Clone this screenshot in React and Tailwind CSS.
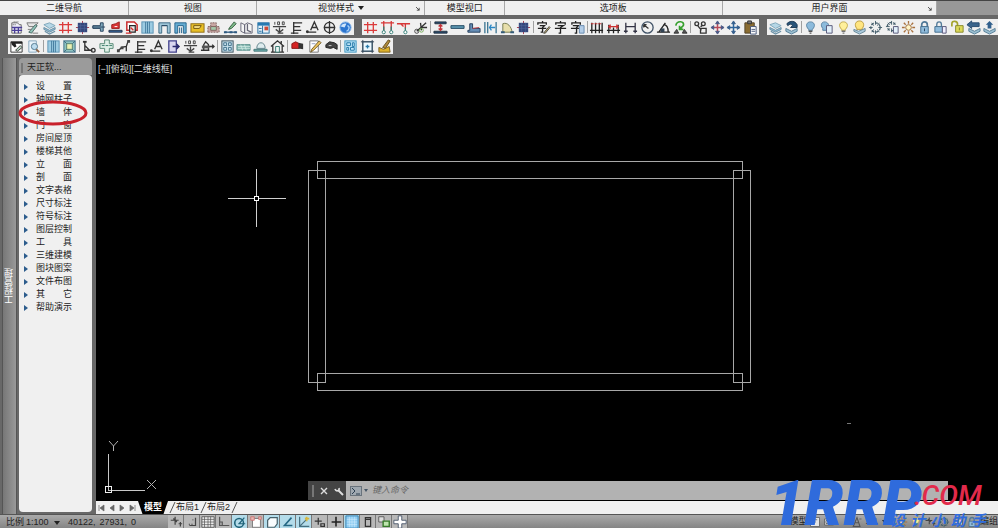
const STROKE = { fill: 'none', strokeWidth: 1.4 }

const icons = {
  table: (
    <>
      <path d="M3 14V3h6l2 2h2v9z" fill="#eeeef6" stroke="#666" />
      <path d="M5 2h6M4 5h4" stroke="#555" strokeDasharray="1 1" />
      <path d="M3 8h11M3 11h11M6 8v6M10 8v6" stroke="#4b3f9a" strokeWidth="1.4" />
    </>
  ),
  plan: (
    <>
      <path d="M2 3h12l-4 4H4z" fill="#e5e5e5" stroke="#777" />
      <path d="M4 13l7-8 2 1-6 8z" fill="#8fc3b8" stroke="#4e6b66" />
      <path d="M3 10h4M8 14h6" stroke="#777" />
    </>
  ),
  layers: (
    <>
      <path d="M2 5l6-2 6 3-6 3z" fill="#b6d7e6" stroke="#7fa6ba" />
      <path d="M2 8l6 3 6-3v2l-6 3-6-3z" fill="#92bdd2" stroke="#668da4" />
      <path d="M3 12l5 3 6-3" stroke="#6b91a6" {...STROKE} />
    </>
  ),
  grid: <path d="M5 2v12M11 2v12M1 5h14M1 11h14" stroke="#dc3b3b" {...STROKE} />,
  column: (
    <>
      <path d="M8 1v14M1 8h14" stroke="#a33a4e" />
      <rect x="3" y="3" width="10" height="10" fill="#34477c" />
      <path d="M3 6h10M3 9h10M6 3v10M10 3v10" stroke="#54679c" strokeWidth=".6" />
    </>
  ),
  wall: (
    <>
      <path d="M2 6h8V3h3v9h-3V9H2z" fill="#7fa9bd" stroke="#27435e" />
      <path d="M1 7.5h14" stroke="#27435e" />
    </>
  ),
  redWall: (
    <>
      <path d="M4 9V5l4-1 4-2v7z" fill="#d93636" stroke="#9b1d1d" />
      <path d="M1 11h14v2H1z" fill="#35649b" stroke="#25344d" />
      <path d="M7 7h3" stroke="#fff" />
    </>
  ),
  room: (
    <>
      <path d="M3 2h8l3 3v6H3z" fill="#fff" stroke="#c92c2c" strokeWidth="1.6" />
      <path d="M6 6h6v7H6z" fill="#e8e8e8" stroke="#262626" strokeWidth="1.3" />
      <path d="M2 14h6M7 8l3 3" stroke="#d42c2c" {...STROKE} />
    </>
  ),
  window: (
    <>
      <rect x="2" y="2" width="12" height="12" fill="#9ccbe2" stroke="#5a93b4" />
      <path d="M6 2v12M8 2v12M10 2v12" stroke="#427a9d" />
    </>
  ),
  door: (
    <>
      <path d="M2 14V3h12v11h-3V6H5v8z" fill="#9fc6d8" stroke="#3d6b84" />
      <path d="M5 6h6" stroke="#27435e" />
    </>
  ),
  doorBlue: (
    <>
      <path d="M2 14V3h12v11h-3V6H5v8z" fill="#66add3" stroke="#28648b" />
      <path d="M7 8v6M9 8v6" stroke="#28648b" />
    </>
  ),
  note: (
    <>
      <rect x="1" y="4" width="14" height="9" fill="#e8bf27" stroke="#8d6b15" />
      <path d="M4 6h8l-2 3H4z" fill="#f6e08a" stroke="#72550e" />
    </>
  ),
  block: (
    <>
      <path d="M2 13V7h3V3h6v4h3v6z" fill="#c9a7a4" stroke="#80625f" strokeDasharray="2 1" />
      <path d="M5 7h6v4H5z" fill="#a4c8aa" stroke="#80625f" />
    </>
  ),
  pencil: (
    <>
      <path d="M7 8l5-6 2 2-5 5-3 1z" fill="#7fba8a" stroke="#305c3b" />
      <path d="M2 13h12" stroke="#2e5a80" {...STROKE} />
      <path d="M1 12h3v2H1zM7 12h3v2H7zM12 12h3v2h-3z" fill="#2e5a80" />
    </>
  ),
  book: (
    <>
      <path d="M2 3l4 2v9l-4-2zM6 5l3-2 5 2v9H6z" fill="#f5f5f5" stroke="#686877" />
      <path d="M9 4v7l4 2" stroke="#686877" {...STROKE} />
    </>
  ),
  panel: (
    <>
      <rect x="2" y="3" width="12" height="11" fill="#e6f3fb" stroke="#246c9e" />
      <path d="M2 3h12v3H2z" fill="#2779b1" />
      <path d="M7 6v8M3 9h3M3 12h3" stroke="#246c9e" />
      <rect x="9" y="7" width="4" height="4" fill="#ce4a38" />
    </>
  ),
  dims: (
    <>
      <path d="M1 7h14M8 8v6M6 14h6M4 10l4 3 4-3" stroke="#444" {...STROKE} />
      <path d="M3 2v3M6 2h2v3H6zM11 2h2v3h-2z" stroke="#444" fill="none" />
    </>
  ),
  ladder: <path d="M5 2v13M5 3h9M5 7h7M5 11h8M2 14h8" stroke="#333" {...STROKE} />,
  text: (
    <>
      <path d="M6 11l4-9 4 9M7 8h6M2 13h10" stroke="#333" {...STROKE} />
      <circle cx="2.500" cy="12.500" r="1.500" fill="#333" />
    </>
  ),
  compass: (
    <>
      <circle cx="8" cy="8" r="5.5" stroke="#333" {...STROKE} />
      <path d="M8 1v14M2 8h12" stroke="#333" {...STROKE} />
    </>
  ),
  help: (
    <>
      <circle cx="8" cy="8" r="6" fill="#2c75cf" stroke="#8db8e8" />
      <path d="M3 7c1-3 4-4 6-3l-2 4z" fill="#cfe5fb" />
      <path d="M10 6c3 1 2 5-1 6" stroke="#a8cff5" {...STROKE} />
    </>
  ),
  axis: (
    <>
      <path d="M1 3h14M4 1v10M12 1v10" stroke="#d63737" {...STROKE} />
      <path d="M4 7v5M12 7v5" stroke="#368078" {...STROKE} />
      <circle cx="4" cy="13" r="1.7" stroke="#368078" fill="#fff" />
      <circle cx="12" cy="13" r="1.7" stroke="#368078" fill="#fff" />
    </>
  ),
  axisT: (
    <>
      <path d="M1 4h14M10 4v5M5 4l3 3" stroke="#d63737" {...STROKE} />
      <path d="M10 8v4" stroke="#368078" {...STROKE} />
      <circle cx="10" cy="13" r="1.700" stroke="#368078" fill="#fff" />
    </>
  ),
  trim: (
    <>
      <path d="M4 12L14 3M8 3l1 8M8 8h7" stroke="#333" {...STROKE} />
      <circle cx="4" cy="12" r="2.2" stroke="#444" fill="none" />
      <circle cx="9" cy="11" r="2" stroke="#78ad5b" fill="none" />
    </>
  ),
  beam: (
    <>
      <path d="M2 2h12v2H2zM1 12h14v2H1z" fill="#264b70" stroke="#253442" />
      <path d="M8 5v6M6 7l2-2 2 2M6 9l2 2 2-2" stroke="#c3343a" {...STROKE} />
    </>
  ),
  bar: <path d="M1 6h14v3H1z" fill="#5a94ae" stroke="#284f68" />,
  foot: (
    <>
      <path d="M2 11h2V4h3v5h8v4H2z" fill="#668eb6" stroke="#253e5b" />
      <path d="M7 9l7-1" stroke="#bf3e47" />
    </>
  ),
  split: (
    <>
      <path d="M2 2v12M5 2v12M14 2v12" stroke="#3d7693" {...STROKE} />
      <path d="M7 8h6M9 5L7 8l2 3" stroke="#2a87c4" {...STROKE} />
    </>
  ),
  arc: (
    <>
      <path d="M3 13V4c5-2 9 3 10 9z" fill="#e8dfac" stroke="#737a50" />
      <path d="M1 13h4M11 13h4" stroke="#345c79" strokeWidth="2" />
    </>
  ),
  glyphEdit: (
    <>
      <path d="M7 1v2M2 5V3h9v2M4 6h5L7 8v5H5M2 9h9" stroke="#222" {...STROKE} />
      <path d="M8 14l6-7 1 1-5 6z" fill="#c6b06b" stroke="#444" />
    </>
  ),
  glyph: <path d="M8 1v2M3 5V3h10v2M5 6h6L8 8v6H6M2 9h12" stroke="#222" {...STROKE} />,
  glyphPage: (
    <>
      <path d="M6 1v2M2 5V3h9v2M3 6h6L7 8v6H5M1 9h9" stroke="#222" {...STROKE} />
      <path d="M10 6h5v8h-5z" fill="#b4cee8" stroke="#668bb0" />
    </>
  ),
  marks: (
    <>
      <path d="M1 11h14M3 3v11M7 3v11M11 3v11M14 3v11" stroke="#222" {...STROKE} />
      <path d="M2 4h3M6 4h3M10 4h3" stroke="#c33" />
    </>
  ),
  marksRed: (
    <>
      <path d="M3 5v9M8 8v6M13 5v9M1 11h14" stroke="#222" {...STROKE} />
      <path d="M3 7h10M5 5L3 7l2 2M11 5l2 2-2 2" stroke="#c33" {...STROKE} />
    </>
  ),
  marksPlain: <path d="M3 3v11M13 3v11M3 7h10M1 12h4M11 12h4" stroke="#334" {...STROKE} />,
  radius: (
    <>
      <circle cx="8" cy="8" r="6" stroke="#415367" {...STROKE} />
      <path d="M9 9L4 5M4 5v3M4 5h3" stroke="#333" {...STROKE} />
    </>
  ),
  angle: (
    <>
      <path d="M1 13h14M3 13L10 3M8 5c4 0 5 4 5 8" stroke="#222" {...STROKE} />
      <path d="M5 9h4v4H5z" fill="#345" />
    </>
  ),
  refresh: (
    <>
      <path d="M3 6c1-6 10-5 8 0L8 9M7 6v4h4" stroke="#35a02d" fill="none" strokeWidth="1.8" />
      <path d="M1 14l3-4 2 4zM10 14l2-4 3 4z" fill="#555" stroke="#333" />
    </>
  ),
  copies: (
    <>
      <circle cx="4" cy="4" r="2" stroke="#333" {...STROKE} />
      <circle cx="11" cy="4" r="2" stroke="#333" {...STROKE} />
      <path d="M5 6l4 5M8 7l2-1M8 9h6v5H8z" stroke="#333" {...STROKE} />
    </>
  ),
  moveRed: (
    <>
      <path d="M8 2v12M2 8h12" stroke="#b84a5a" strokeWidth="1.6" />
      <path d="M6 4l2-3 2 3zM6 12l2 3 2-3zM4 6L1 8l3 2zM12 6l3 2-3 2z" fill="#4a5a86" stroke="#4a5a86" />
    </>
  ),
  move: (
    <>
      <path d="M8 2v12M2 8h12" stroke="#2c649b" strokeWidth="1.6" />
      <path d="M6 4l2-3 2 3zM6 12l2 3 2-3zM4 6L1 8l3 2zM12 6l3 2-3 2z" fill="#39618e" stroke="#39618e" />
    </>
  ),
  paste: (
    <>
      <path d="M2 3h10v11H2z" fill="#8a6c31" stroke="#514227" />
      <path d="M5 1h4v3H5z" fill="#777" stroke="#333" />
      <path d="M8 7h6v8H8z" fill="#fff" stroke="#457" />
      <path d="M9 10h4M9 12h4" stroke="#457" />
    </>
  ),
  layerBack: (
    <>
      <path d="M2 9l6 3 6-3v3l-6 3-6-3z" fill="#9bbfd1" stroke="#557e98" />
      <path d="M3 4c4-4 9-3 11 1v3H7l2-2C8 4 6 4 4 6z" fill="#28547a" stroke="#1c3852" />
    </>
  ),
  bulbBlue: (
    <>
      <path d="M6 10C2 6 4 2 8 2s6 4 2 8v1H6z" fill="#8cbbdc" stroke="#5580a0" />
      <path d="M6 12h4M7 14h2" stroke="#555" {...STROKE} />
    </>
  ),
  bulbPage: (
    <>
      <path d="M4 9C1 5 3 2 6 2s6 3 3 7v2H4z" fill="#8cbbdc" stroke="#5580a0" />
      <path d="M8 6h6v8H8z" fill="#e2f0fa" stroke="#557" />
    </>
  ),
  bulb: (
    <>
      <path d="M6 10C2 6 4 2 8 2s6 4 2 8v1H6z" fill="#fff09b" stroke="#bfa643" />
      <path d="M6 12h4M7 14h2" stroke="#777" {...STROKE} />
    </>
  ),
  bulbLayers: (
    <>
      <path d="M5 9C2 5 4 1 8 1s6 4 3 8v1H5z" fill="#ffe581" stroke="#bb9a39" />
      <path d="M2 10l5 2 7-3v3l-6 3-6-3z" fill="#abcadb" stroke="#668699" />
    </>
  ),
  freeze: (
    <>
      <circle cx="8" cy="8" r="5" stroke="#445e6c" {...STROKE} strokeDasharray="3 1.5" />
      <path d="M8 1v4M8 11v4M1 8h4M11 8h4M4 3l2 3M10 10l2 3M12 3l-2 3M4 13l2-3" stroke="#445e6c" fill="none" />
    </>
  ),
  freezePage: (
    <>
      <circle cx="7" cy="7" r="4.5" stroke="#445e6c" {...STROKE} strokeDasharray="3 1.5" />
      <path d="M7 1v4M7 9v4M1 7h4M3 3l2 2M11 3L9 5M3 11l2-2" stroke="#445e6c" fill="none" />
      <path d="M9 7h5v7H9z" fill="#e2f0fa" stroke="#557" />
    </>
  ),
  sun: (
    <>
      <circle cx="8" cy="8" r="3" fill="#fff5c7" stroke="#9b6b3b" />
      <path d="M8 1v3M8 12v3M1 8h3M12 8h3M3 3l2 2M11 11l2 2M13 3l-2 2M3 13l2-2" stroke="#a9713e" {...STROKE} />
    </>
  ),
  lock: (
    <>
      <path d="M5 8V5c0-4 6-4 6 0v3" stroke="#517998" fill="none" strokeWidth="1.8" />
      <path d="M4 7h8v7H4z" fill="#8fbbdb" stroke="#426d8d" />
      <path d="M8 9v3" stroke="#27435e" />
    </>
  ),
  lockPage: (
    <>
      <path d="M4 7V5c0-4 5-4 5 0v2" stroke="#517998" {...STROKE} />
      <path d="M2 7h8v6H2z" fill="#8fbbdb" stroke="#426d8d" />
      <path d="M10 7h4v7h-4z" fill="#eef" stroke="#557" />
    </>
  ),
  unlock: (
    <>
      <path d="M2 7V4c0-4 6-3 6 0v3" stroke="#a5a42e" fill="none" strokeWidth="1.8" />
      <path d="M6 6h8v7H6z" fill="#ddd958" stroke="#85882a" />
      <path d="M10 8v3" stroke="#85882a" />
    </>
  ),
  layerPrev: (
    <>
      <path d="M3 9l6 3 6-3v3l-6 3-6-3z" fill="#9bbfd1" stroke="#557e98" />
      <path d="M1 5l5-4v2h8v4H6v2z" fill="#3a648b" stroke="#274b70" />
    </>
  ),
  layerUp: (
    <>
      <path d="M2 9l6 3 6-3v3l-6 3-6-3z" fill="#9bbfd1" stroke="#557e98" />
      <path d="M8 1l4 4h-2v4H6V5H4z" fill="#31608d" />
    </>
  ),
  edit: (
    <>
      <path d="M2 3h12v11H2z" fill="#fff" stroke="#333" />
      <path d="M2 3h12v2H7l1 3-2 1-3-3z" fill="#222" />
      <path d="M7 12l5-5 2 2-5 4z" fill="#b6d4c1" stroke="#444" />
    </>
  ),
  preview: (
    <>
      <path d="M3 2h8v12H3z" fill="#eaf3fa" stroke="#84a5bd" />
      <circle cx="9" cy="8" r="3.3" fill="#bddcef" stroke="#52778e" />
      <path d="M11 11l3 3" stroke="#8b5f42" strokeWidth="2" />
    </>
  ),
  elevation: (
    <>
      <rect x="2" y="2" width="12" height="12" fill="#8fc3c0" stroke="#3d6b84" />
      <rect x="5" y="5" width="6" height="6" fill="#ecf0b2" stroke="#57816b" />
      <path d="M2 2l3 3M14 2l-3 3M2 14l3-3M14 14l-3-3" stroke="#3d6b84" />
    </>
  ),
  leader: (
    <>
      <path d="M3 2v10h8M3 7l5 5" stroke="#333" {...STROKE} />
      <path d="M1 2h4v2H1z" fill="#333" />
      <circle cx="12" cy="12" r="2" stroke="#333" {...STROKE} />
    </>
  ),
  cross: (
    <>
      <path d="M6 1h5v4h4v5h-4v4H6v-4H1V5h5z" fill="#e0f1e8" stroke="#548774" />
      <path d="M3 7h11" stroke="#367966" strokeDasharray="3 1" />
    </>
  ),
  polyline: (
    <>
      <path d="M2 13l4-4 5-1 2-6M11 8v5" stroke="#333" {...STROKE} />
      <path d="M1 11h3v3H1zM5 8h3v3H5zM12 1h3v3h-3z" fill="#444" />
    </>
  ),
  exit: (
    <>
      <path d="M3 2h8v12H3z" fill="#d9d7f0" stroke="#42418c" strokeWidth="1.400" />
      <path d="M7 8h7M11 5l3 3-3 3" stroke="#29296d" {...STROKE} />
    </>
  ),
  level: (
    <>
      <path d="M1 12h9M4 12V6l2-3 3 3v6M9 8h6M13 6l2 2-2 2" stroke="#333" {...STROKE} />
      <path d="M2 7h8v3H2z" fill="#555" />
    </>
  ),
  tiles: (
    <>
      <rect x="2" y="2" width="12" height="12" fill="#c8e1ed" stroke="#394e5b" />
      <path d="M4 4h3v3H4zM9 4h3v3H9zM4 9h3v3H4zM9 9h3v3H9z" stroke="#42718b" fill="none" />
    </>
  ),
  ground: (
    <>
      <path d="M1 6h14v6H1z" fill="#8bbbb5" stroke="#5c928e" />
      <path d="M2 8h13M2 10h13M5 6l2 6M9 6l2 6" stroke="#d8efea" strokeWidth=".7" />
    </>
  ),
  dome: (
    <>
      <path d="M4 10c0-8 9-8 9 0z" fill="#deecee" stroke="#62828b" />
      <path d="M1 11h14v2H1z" fill="#6cadad" stroke="#467779" />
    </>
  ),
  house: (
    <>
      <path d="M1 8l7-6 7 6M3 7v7M13 7v7M12 2v4M1 14h14" stroke="#333" {...STROKE} />
      <path d="M6 8h4v6H6z" fill="#edf5f4" stroke="#377a71" />
    </>
  ),
  camera: (
    <>
      <path d="M2 5l4-2 4 2v5H2z" fill="#d52222" stroke="#881818" />
      <path d="M9 4l5 1v6l-5-1z" fill="#343434" />
    </>
  ),
  sheetEdit: (
    <>
      <path d="M3 2h9v12H3z" fill="#fff" stroke="#777" />
      <path d="M5 11l8-9 2 2-8 8-3 2z" fill="#efc65e" stroke="#705b29" />
      <path d="M5 5h4" stroke="#94a1c2" />
    </>
  ),
  cameraDark: (
    <>
      <path d="M2 6l4-3 5 1 3 2v5l-4-2-3 1-5-1z" fill="#444" stroke="#222" />
      <path d="M5 7h3" stroke="#ccc" />
    </>
  ),
  mosaic: (
    <>
      <rect x="2" y="2" width="12" height="12" fill="#bce4f8" stroke="#3c94bf" />
      <path d="M4 4h4v3H4zM10 4h2v4h-2zM4 9h2v3H4zM8 9h4v3H8z" stroke="#2379a8" fill="none" />
    </>
  ),
  frame: (
    <>
      <rect x="3" y="3" width="10" height="10" fill="#edf9ff" stroke="#22536f" />
      <path d="M1 3h14M3 1v14M13 1v14M1 13h14" stroke="#345" />
      <path d="M8 6v4M6 8h4" stroke="#287aaa" strokeWidth="1.400" />
    </>
  ),
  brush: (
    <>
      <path d="M2 9l5 2 6-3 1 6H2z" fill="#ddb22c" stroke="#7e601e" />
      <path d="M6 9l6-8 2 1-5 8z" fill="#b08b3c" stroke="#65501f" />
    </>
  ),
  // status bar
  snapInfer: <path d="M7 2v9M2 6h9M11 10h4M13 8v5M5 4l4 4" stroke="#444" {...STROKE} />,
  snap: <path d="M12 3v9H5M5 10v1M8 10v1M9 5v1" stroke="#444" {...STROKE} />,
  gridDots: (
    <>
      <path d="M1 2h14v12H1z" fill="#eee" stroke="#555" />
      <path d="M1 5h14M1 8h14M1 11h14M4 2v12M8 2v12M11 2v12" stroke="#555" strokeWidth=".8" />
    </>
  ),
  ortho: <path d="M3 2v10h11M3 8h3v4" stroke="#555" {...STROKE} />,
  polar: (
    <>
      <circle cx="7" cy="9" r="5" stroke="#20647a" {...STROKE} strokeWidth="1.8" />
      <path d="M7 10l6-7M6 10h8" stroke="#20647a" {...STROKE} />
    </>
  ),
  osnap: (
    <>
      <rect x="4" y="4" width="9" height="10" fill="#fff" stroke="#777" />
      <path d="M2 2h4v4H2zM11 2h3v3h-3z" fill="#e9b9b4" stroke="#cb7272" />
    </>
  ),
  osnap3d: <path d="M3 6l3-3h8v7l-3 4H3z" fill="#f9fcfd" stroke="#46616b" strokeWidth="1.400" />,
  otrack: <path d="M12 3L4 12h9" stroke="#256884" {...STROKE} strokeWidth="1.8" />,
  ducs: (
    <>
      <path d="M3 2v11h11M3 13l8-8" stroke="#467080" {...STROKE} />
      <path d="M11 2v5M9 4h5" stroke="#d8b63d" strokeWidth="2" />
    </>
  ),
  dyn: <path d="M6 3v8M2 7h8M9 10h4v3H9z" stroke="#333" {...STROKE} />,
  lineweight: <path d="M8 2v11M3 8h11" stroke="#222" strokeWidth="1.8" />,
  transparency: (
    <>
      <path d="M1 1h14v14H1z" fill="#90cdf2" stroke="#2d7cae" />
      <path d="M2 5h12M2 8h12M2 11h12M5 2v12M8 2v12M11 2v12" stroke="#d6f0ff" strokeWidth=".6" />
    </>
  ),
  quickProps: <path d="M5 3h6v10H5zM5 5h6" stroke="#333" {...STROKE} />,
  cycling: (
    <>
      <path d="M2 2h6v6H2z" fill="#ddd" stroke="#555" />
      <path d="M7 7h7v6H7z" fill="#bee5ae" stroke="#387c2b" strokeWidth="1.600" />
    </>
  ),
  plus: <path d="M6 1h4v5h5v4h-5v5H6v-5H1V6h5z" fill="#fff" stroke="#465368" />,
  paper: <path d="M2 2h12v12H2zM5 5h6M5 8h4" stroke="#555" fill="#e5e5e5" />,
  viewport: <path d="M2 4h12v8H2zM4 6h5v4H4z" stroke="#555" fill="#ddd" />,
  person: (
    <>
      <path d="M3 14L8 2l4 12zM5 9h5" stroke="#555" {...STROKE} />
      <path d="M11 4h3" stroke="#555" />
    </>
  ),
}

// '|' is a divider
const mainTools = [
  'table', 'plan', 'layers', 'grid', 'column', 'wall', 'redWall', 'room', 'window', 'door', 'doorBlue',
  'note', 'block', 'pencil', 'book', 'panel', 'dims', 'ladder', 'text', 'compass', 'help',
]

const drawTools = [
  'grid', 'axis', 'axisT', 'trim', '|', 'beam', 'bar', 'foot', 'split', 'arc', 'column', '|',
  'glyphEdit', 'glyph', 'glyphPage', '|', 'marks', 'marksRed', 'marksPlain', 'radius', 'angle', 'refresh', '|',
  'copies', 'moveRed', 'move', 'paste',
]

const layerTools = [
  'layers', 'layerBack', '|', 'bulbBlue', 'bulbPage', 'bulb', 'bulbLayers', 'freeze', 'freezePage', 'sun',
  'lock', 'lockPage', 'unlock', 'layerPrev', 'layerUp',
]

const secondTools = [
  'edit', 'preview', '|', 'window', 'elevation', '|', 'leader', 'cross', 'polyline', 'ladder', 'text', 'exit',
  'dims', 'level', '|', 'tiles', 'ground', 'dome', 'house', '|', 'camera', 'sheetEdit', 'cameraDark', '|',
  'mosaic', 'frame', 'brush',
]

const statusTools = [
  { icon: 'snapInfer' },
  { icon: 'snap' },
  { icon: 'gridDots' },
  { icon: 'ortho' },
  { icon: 'polar', on: true },
  { icon: 'osnap' },
  { icon: 'osnap3d', on: true },
  { icon: 'otrack', on: true },
  { icon: 'ducs', on: true },
  { icon: 'dyn' },
  { icon: 'lineweight' },
  { icon: 'transparency', on: true },
  { icon: 'quickProps' },
  { icon: 'cycling' },
  { icon: 'plus' },
]

const menuItems = [
  '设置', '轴网柱子', '墙体', '门窗', '房间屋顶', '楼梯其他', '立面', '剖面', '文字表格',
  '尺寸标注', '符号标注', '图层控制', '工具', '三维建模', '图块图案', '文件布图', '其它', '帮助演示',
]

function Icon({ name, className = 'size-[15px]' }) {
  return (
    <svg viewBox="0 0 16 16" className={`${className} shrink-0`} aria-hidden="true">
      {icons[name]}
    </svg>
  )
}

function Toolbar({ tools, className }) {
  return (
    <div className={`flex h-4 items-center bg-[#f0f0f0] ${className}`}>
      {tools.map((name, i) =>
        name === '|' ? (
          <span key={i} className="mx-px h-3 w-px bg-[#a0a0a0]" />
        ) : (
          <button key={i} aria-label={name} className="flex min-w-0 flex-1 justify-center">
            <Icon name={name} />
          </button>
        )
      )}
    </div>
  )
}

function RibbonTab({ label, className, arrow, launcher }) {
  return (
    <button className={`relative flex items-center justify-center gap-1 border-r border-[#a8a8a8] bg-[#f0f0f0] ${className}`}>
      {label}
      {arrow && <Caret />}
      {launcher && (
        <svg viewBox="0 0 5 5" className="absolute right-1 bottom-1 size-1" aria-hidden="true">
          <path d="M0 0l4 4M4 1v3H1" stroke="#333" fill="none" />
        </svg>
      )}
    </button>
  )
}

function Caret() {
  return (
    <svg viewBox="0 0 6 4" className="h-1 w-1.5 shrink-0" aria-hidden="true">
      <path d="M0 0h6L3 4z" fill="#222" />
    </svg>
  )
}

function SideMenu() {
  return (
    <aside className="flex w-[73px] shrink-0 flex-col">
      <div className="flex h-[17px] items-center gap-1 rounded-t bg-[#9b9b9b] pt-0.5 pl-0.5">
        <span className="h-2.5 w-0.5 bg-[#777]" />
        天正软...
      </div>
      <ul className="flex-1 rounded bg-[#f0f0f0] pt-[5px]">
        {menuItems.map((item) => (
          <li key={item} className="relative">
            <button className="flex h-[13px] w-full items-center gap-2 pl-[5px]">
              <svg viewBox="0 0 4 6" className="h-1.5 w-1" aria-hidden="true">
                <path d="M0 0l4 3-4 3z" fill="#2c5c8c" />
              </svg>
              <span className="flex w-9 justify-between whitespace-nowrap">
                {item.length === 2 ? [...item].map((c) => <span key={c}>{c}</span>) : item}
              </span>
            </button>
            {item === '墙体' && (
              <svg viewBox="0 0 70 26" className="pointer-events-none absolute -top-1.5 -left-px z-10 h-[26px] w-[70px]" aria-hidden="true">
                <ellipse cx="35" cy="13" rx="33" ry="11" fill="none" stroke="#c9212b" strokeWidth="3" />
              </svg>
            )}
          </li>
        ))}
      </ul>
    </aside>
  )
}

function Drawing() {
  return (
    <svg className="absolute inset-0 h-full w-full" shapeRendering="crispEdges" fill="none" stroke="#a8a8a8">
      <rect x="221.5" y="103.5" width="425" height="17" />
      <rect x="221.5" y="315.5" width="425" height="17" />
      <rect x="212.5" y="112.5" width="17" height="212" />
      <rect x="637.5" y="112.5" width="17" height="212" />
      <path d="M132 140.5h58M160.5 111v58" stroke="#d0d0d0" />
      <rect x="158.5" y="138.5" width="4" height="4" fill="#000" stroke="#fff" />
      <path d="M751 365.5h4" stroke="#777" />
      <path d="M12.5 396v36h36" stroke="#c8c8c8" />
      <rect x="9.5" y="428.5" width="6" height="6" stroke="#eee" />
      <g shapeRendering="auto">
        <path d="M13 383l4.500 5 4.500-5M17.500 388v5M51 422l9 9M60 422l-9 9" stroke="#b0b0b0" />
      </g>
    </svg>
  )
}

function CommandLine() {
  return (
    <div className="absolute right-[50px] bottom-px left-[212px] flex h-[19px] bg-[#b2b2b2]">
      <div className="flex w-[38px] items-center gap-1.5 bg-[#444] pl-1">
        <span className="h-3 w-0.5 bg-[#777]" />
        <button aria-label="关闭">
          <svg viewBox="0 0 8 8" className="size-2" aria-hidden="true">
            <path d="M1 1l6 6M7 1L1 7" stroke="#ddd" strokeWidth="1.4" />
          </svg>
        </button>
        <button aria-label="自定义">
          <svg viewBox="0 0 10 10" className="size-2.5" aria-hidden="true">
            <path d="M4 4l5 5" stroke="#ddd" strokeWidth="2" />
            <path d="M1 3c1 3 5 2 4-1" stroke="#ddd" strokeWidth="1.6" fill="none" />
          </svg>
        </button>
      </div>
      <button aria-label="最近使用的命令" className="ml-1 flex items-center gap-0.5">
        <svg viewBox="0 0 12 10" className="h-2.5 w-3" aria-hidden="true">
          <rect x=".5" y=".5" width="11" height="9" fill="#9fa8b0" stroke="#69737c" />
          <path d="M2 2l3 3-3 3M6 8h4" stroke="#2b3e50" fill="none" />
        </svg>
        <svg viewBox="0 0 4 3" className="h-[3px] w-1" aria-hidden="true">
          <path d="M0 0h4L2 3z" fill="#456" />
        </svg>
      </button>
      <input
        aria-label="键入命令"
        placeholder="键入命令"
        className="ml-1 min-w-0 flex-1 bg-transparent italic outline-none placeholder:text-[#666]"
      />
    </div>
  )
}

function LayoutTabs() {
  return (
    <div className="flex h-[13px] items-stretch bg-[#f0f0f0]">
      <div className="flex w-[42px] items-center justify-around">
        {['M2 1v6M7 1L3 4l4 3z', 'M6 1L2 4l4 3z', 'M2 1l4 3-4 3z', 'M6 1v6M1 1l4 3-4 3z'].map((d, i) => (
          <button key={d} aria-label={['第一个', '上一个', '下一个', '最后一个'][i]}>
            <svg viewBox="0 0 8 8" className="size-2" aria-hidden="true">
              <path d={d} fill="#666" stroke="#666" strokeWidth=".7" />
            </svg>
          </button>
        ))}
      </div>
      <button className="bg-black px-1.5 font-bold text-white [clip-path:polygon(0_0,100%_0,85%_100%,15%_100%)]">模型</button>
      <TabEdge />
      <button>布局1</button>
      <TabEdge />
      <button>布局2</button>
      <TabEdge />
    </div>
  )
}

function TabEdge() {
  return (
    <svg viewBox="0 0 8 13" className="h-[13px] w-2" aria-hidden="true">
      <path d="M2 12L7 1" stroke="#555" />
    </svg>
  )
}

function StatusBar() {
  return (
    <footer className="flex h-[14px] shrink-0 items-center border-t border-[#555] bg-linear-to-b from-[#aaa] to-[#858585]">
      <label className="flex w-[62px] shrink-0 items-center gap-0.5 pt-0.5 pl-1.5 whitespace-nowrap">
        比例
        <select className="w-[26px] appearance-none bg-transparent">
          <option>1:100</option>
        </select>
        <Caret />
      </label>
      <div className="flex w-[106px] shrink-0 gap-1 pt-0.5 pl-1.5">
        <span>40122,</span>
        <span>27931,</span>
        <span>0</span>
      </div>
      <div className="flex shrink-0">
        {statusTools.map(({ icon, on }) => (
          <button
            key={icon}
            aria-label={icon}
            className={`flex h-[13px] w-4 items-center justify-center border-r border-[#777] ${on ? 'bg-[#b4dcea]' : 'bg-[#b8b8b8]'}`}
          >
            <Icon name={icon} className="size-3.5" />
          </button>
        ))}
      </div>
      <div className="ml-auto flex items-center gap-0.5 whitespace-nowrap">
        <button>模型</button>
        <Icon name="paper" className="size-3" />
        <Icon name="viewport" className="size-3" />
        <span className="w-3" />
        <Icon name="person" className="size-3" />
        <button className="flex items-center gap-1">
          1:1 <Caret />
        </button>
        <span className="w-1" />
        <Icon name="sun" className="size-3" />
        <Icon name="bulb" className="size-3" />
        <Icon name="snapInfer" className="size-3" />
        <Icon name="freeze" className="size-3" />
        <Icon name="viewport" className="size-3" />
        <Icon name="lock" className="size-3" />
        <button>编组</button>
      </div>
    </footer>
  )
}

function Watermark() {
  return (
    <div className="pointer-events-none absolute right-3 bottom-0 z-20 flex h-12 font-[Roboto,sans-serif] text-[#2f6bdc] italic">
      <span className="text-[62px] leading-[48px] font-black">1RRP</span>
      <div className="-ml-8 flex w-24 flex-col">
        <span className="pl-6 text-[28px] leading-8 font-medium text-[#e22a4b]">.COM</span>
        <span className="flex justify-between font-['Noto_Sans_CJK_SC',sans-serif] text-[15px] leading-4 font-bold">
          {[...'设计小助手'].map((c) => (
            <span key={c}>{c}</span>
          ))}
        </span>
      </div>
    </div>
  )
}

export default function App() {
  return (
    <div className="relative flex h-screen flex-col overflow-hidden bg-[#686868] font-['Liberation_Sans','Noto_Sans_CJK_SC',sans-serif] text-[9px] leading-[13px] text-[#222]">
      <nav className="flex h-[15px] shrink-0 border-t border-[#444] bg-[#989898]">
        <RibbonTab label="二维导航" className="flex-[129]" />
        <RibbonTab label="视图" className="flex-[128]" />
        <RibbonTab label="视觉样式" className="flex-[168]" arrow launcher />
        <RibbonTab label="模型视口" className="flex-[79]" />
        <RibbonTab label="选项板" className="flex-[218]" />
        <RibbonTab label="用户界面" className="flex-[215]" launcher />
        <div className="flex-[61]" />
      </nav>

      <div className="mt-1 flex shrink-0 gap-2 pl-2">
        <Toolbar tools={mainTools} className="flex-[346]" />
        <Toolbar tools={drawTools} className="flex-[397]" />
        <Toolbar tools={layerTools} className="flex-[231]" />
      </div>
      <div className="mt-[3px] flex shrink-0 pl-2">
        <Toolbar tools={secondTools} className="w-[385px]" />
      </div>

      <div className="mt-1 flex min-h-0 flex-1">
        <div className="ml-0.5 flex w-[15px] shrink-0 items-center justify-center border-x border-[#555] bg-linear-to-r from-[#777] to-[#999]">
          <span className="rotate-180 text-white [writing-mode:vertical-rl]">工程管理</span>
        </div>
        <div className="flex pr-1 pb-0.5 pl-0.5">
          <SideMenu />
        </div>
        <div className="flex min-w-0 flex-1 flex-col">
          <main className="relative flex-1 overflow-hidden bg-black">
            <Drawing />
            <p className="absolute top-[5px] left-0.5 text-[#ddd]">[−][俯视][二维线框]</p>
            <CommandLine />
          </main>
          <LayoutTabs />
        </div>
      </div>

      <StatusBar />
      <Watermark />
    </div>
  )
}
